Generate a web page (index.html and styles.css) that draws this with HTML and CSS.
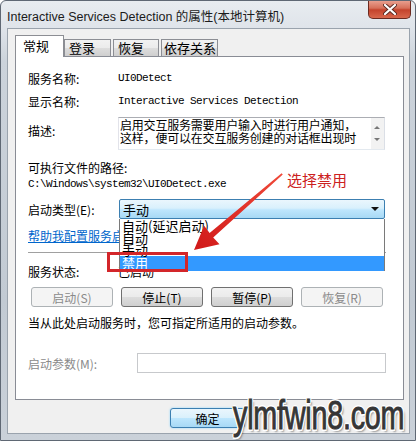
FILE: index.html
```html
<!DOCTYPE html>
<html lang="zh-CN">
<head>
<meta charset="UTF-8" />
<meta name="viewport" content="width=device-width, initial-scale=1.0"/>
<link rel="stylesheet" href="styles.css">
</head>
<body>

<div class="window">
  <div class="titlebar">
    <span class="title">Interactive Services Detection 的属性(本地计算机)</span>
    <div class="close">
      <svg width="14" height="11" viewBox="0 0 14 11">
        <path d="M2 1 L12 10 M12 1 L2 10" stroke="#5a2a22" stroke-width="4" stroke-linecap="round"/>
        <path d="M2 1 L12 10 M12 1 L2 10" stroke="#fff" stroke-width="2.2" stroke-linecap="round"/>
      </svg>
    </div>
  </div>

  <div class="client">
    <div class="tabs">
      <div class="tab active">常规</div>
      <div class="tab tab-login">登录</div>
      <div class="tab tab-recover">恢复</div>
      <div class="tab tab-deps">依存关系</div>
    </div>

    <div class="panel">
      <div class="row row-name">
        <span class="label">服务名称:</span>
        <span class="mono">UI0Detect</span>
      </div>
      <div class="row row-display">
        <span class="label">显示名称:</span>
        <span class="mono">Interactive Services Detection</span>
      </div>
      <div class="row row-desc">
        <span class="label desc-label">描述:</span>
        <div class="textbox">
          <div class="desc-text">启用交互服务需要用户输入时进行用户通知，<br>这样，便可以在交互服务创建的对话框出现时</div>
          <div class="scroll">
            <span class="scroll-up"></span>
            <span class="scroll-down"></span>
          </div>
        </div>
      </div>
      <div class="path-label">可执行文件的路径:</div>
      <div class="mono path-value">C:\Windows\system32\UI0Detect.exe</div>
      <div class="row row-type">
        <span class="label">启动类型(E):</span>
        <div class="combo">
          <span>手动</span>
          <span class="combo-arrow"></span>
          <ul class="combo-list">
            <li>自动(延迟启动)</li>
            <li>自动</li>
            <li>手动</li>
            <li class="selected">禁用</li>
          </ul>
        </div>
      </div>
      <a href="#" class="link">帮助我配置服务启动选项。</a>
      <div class="separator"></div>
      <div class="row row-status">
        <span class="label">服务状态:</span>
        <span>已启动</span>
      </div>
      <div class="buttons">
        <button class="btn" disabled>启动(S)</button>
        <button class="btn">停止(T)</button>
        <button class="btn">暂停(P)</button>
        <button class="btn" disabled>恢复(R)</button>
      </div>
      <div class="note">当从此处启动服务时，您可指定所适用的启动参数。</div>
      <div class="row row-param">
        <span class="label disabled-text">启动参数(M):</span>
        <div class="param-box"></div>
      </div>
    </div>

    <div class="footer">
      <button class="btn btn-default">确定</button>
    </div>
  </div>

  <!-- 标注 -->
  <div class="mark-box"></div>
  <svg class="mark-arrow" width="416" height="441" viewBox="0 0 416 441">
    <defs>
      <linearGradient id="arrowFill" x1="1" y1="0" x2="0" y2="1">
        <stop offset="0" stop-color="#f04a3a"/>
        <stop offset="1" stop-color="#d01818"/>
      </linearGradient>
    </defs>
    <polygon fill="url(#arrowFill)" points="282.8,174.6 213.2,237.6 219.5,244.2 194,250 204.2,225.8 209.6,232.9 281.6,173.2"/>
  </svg>
  <div class="mark-text">选择禁用</div>
  <div class="watermark">ylmfwin8.com</div>
</div>

</body>
</html>
```

FILE: styles.css
```css
:root {
  --text: #000;
  --disabled: #8a8a8a;
  --cjk: "Noto Sans CJK SC", "Noto Sans", sans-serif;
}

body {
  margin: 0;
  font-family: var(--cjk);
  font-size: 12px;
  color: var(--text);
}

.window {
  position: relative;
  width: 416px;
  height: 441px;
  box-sizing: border-box;
  border: 1px solid #5f6874;
  border-radius: 6px 6px 0 0;
  background: linear-gradient(#e8ecf0, #dfe4ea 27px, #ccd3db 60px, #c2cad3 300px, #cad1d9);
  display: flex;
  flex-direction: column;
  overflow: hidden;
}

/* 标题栏 */
.titlebar {
  height: 27px;
  display: flex;
  align-items: center;
  padding-left: 6px;
  padding-top: 1px;
  box-sizing: border-box;
}

.title {
  font-family: "Liberation Sans", var(--cjk);
  font-size: 12.5px;
  color: #1b1b1b;
}

.close {
  position: absolute;
  top: -1px;
  right: 4px;
  width: 43px;
  height: 19px;
  box-sizing: border-box;
  border: 1px solid #6b2a20;
  border-top: none;
  border-radius: 0 0 5px 5px;
  background: linear-gradient(#eba595, #d6705a 45%, #c4432c 55%, #d8674c);
  display: flex;
  align-items: center;
  justify-content: center;
}

/* 客户区 */
.client {
  flex: 1;
  margin: 0 5px 6px 6px;
  border: 1px solid #9aa3ad;
  background: #f0f0f0;
  padding: 7px 5px 0 7px;
  display: flex;
  flex-direction: column;
}

.tabs {
  height: 20px;
  display: flex;
  align-items: flex-end;
  position: relative;
  z-index: 2;
}

.tab {
  height: 17px;
  box-sizing: border-box;
  border: 1px solid #8c8e94;
  border-bottom: none;
  background: linear-gradient(#f2f2f2, #ebebeb 50%, #dddddd 50%, #cfcfcf);
  font-size: 13px;
  line-height: 16px;
  padding-left: 4px;
  white-space: nowrap;
  overflow: hidden;
}

.tab.active {
  width: 49px;
  height: 22px;
  margin-bottom: -1px;
  background: #fff;
  line-height: 20px;
  padding-left: 7px;
}

.tab-login { width: 47px; }
.tab-recover { width: 46px; margin-left: 2px; }
.tab-deps { width: 57px; margin-left: 2px; padding-left: 2px; }

.panel {
  height: 344px;
  box-sizing: border-box;
  border: 1px solid #898c95;
  background: #fff;
  padding: 0 17px 0 12px;
  display: flex;
  flex-direction: column;
}

.row {
  display: flex;
  align-items: center;
}

.label {
  width: 90px;
  flex: none;
}

.mono {
  font-family: "Liberation Mono", monospace;
  font-size: 11px;
  letter-spacing: -0.6px;
}

.row-name { margin-top: 14px; height: 14px; }
.row-display { margin-top: 9px; height: 14px; }

.row-desc {
  margin-top: 9px;
  align-items: flex-start;
}

.desc-label { margin-top: 5px; }

.textbox {
  width: 267px;
  height: 33px;
  box-sizing: border-box;
  border: 1px solid #abadb3;
  border-left-color: #e2e3ea;
  border-right-color: #dbdfe6;
  border-bottom-color: #e3e9ef;
  display: flex;
}

.desc-text {
  flex: 1;
  line-height: 13px;
  padding-left: 1px;
  white-space: nowrap;
  letter-spacing: -0.2px;
}

.scroll {
  width: 13px;
  background: #f2f2f2;
  position: relative;
}

.scroll-up, .scroll-down {
  position: absolute;
  left: 3px;
  width: 0;
  height: 0;
  border-left: 3px solid transparent;
  border-right: 3px solid transparent;
}

.scroll-up { top: 8px; border-bottom: 3px solid #777; }
.scroll-down { top: 20px; border-top: 3px solid #777; }

.path-label { margin-top: 11px; line-height: 14px; }
.path-value { margin-top: 2px; line-height: 14px; }

.row-type { margin-top: 8px; height: 20px; }

.combo {
  position: relative;
  margin-left: 1px;
  width: 266px;
  height: 20px;
  box-sizing: border-box;
  border: 1px solid #3c7fb1;
  border-radius: 2px;
  background: linear-gradient(#eaf6fd, #d9f0fc 45%, #bee6fd 55%, #a7d9f5);
  display: flex;
  align-items: center;
  padding-left: 3px;
  font-size: 13px;
}

.combo-arrow {
  position: absolute;
  right: 5px;
  top: 7px;
  border-left: 4px solid transparent;
  border-right: 4px solid transparent;
  border-top: 4px solid #111;
}

.combo-list {
  position: absolute;
  top: 19px;
  left: -1px;
  width: 266px;
  box-sizing: border-box;
  margin: 0;
  padding: 0;
  list-style: none;
  background: #fff;
  border: 1px solid #7a7a7a;
  border-top: none;
  border-bottom: none;
  z-index: 3;
  font-size: 13px;
}

.combo-list li {
  height: 12px;
  line-height: 12px;
  padding-left: 2px;
}

.combo-list li:first-child { margin-top: 1px; }

.combo-list li.selected {
  height: 15px;
  line-height: 14px;
  background: #3399ff;
  color: #fff;
}

.link {
  margin-top: 10px;
  line-height: 14px;
  color: #0066cc;
  text-decoration: underline;
  align-self: flex-start;
}

.separator {
  margin-top: 9px;
  height: 1px;
  background: #a0a0a0;
}

.row-status { margin-top: 11px; height: 14px; }

.buttons {
  margin-top: 9px;
  padding-left: 3px;
  display: flex;
  gap: 8px;
}

.btn {
  width: 82px;
  height: 20px;
  padding: 0;
  box-sizing: border-box;
  border: 1px solid #707070;
  border-radius: 3px;
  background: linear-gradient(#f2f2f2, #ebebeb 50%, #dddddd 50%, #cfcfcf);
  font-family: var(--cjk);
  font-size: 12px;
  color: #000;
}

.btn:disabled {
  border-color: #adb2b5;
  background: #f4f4f4;
  color: var(--disabled);
}

.btn-default {
  width: 75px;
  border-color: #3c7fb1;
  background: linear-gradient(#eaf6fd, #d9f0fc 50%, #bee6fd 50%, #a7d9f5);
  box-shadow: 0 0 2px #7fd0ff;
}

.note { margin-top: 9px; line-height: 14px; }

.row-param { margin-top: 23px; height: 20px; }

.disabled-text { color: var(--disabled); width: 109px; }

.param-box {
  width: 249px;
  height: 20px;
  box-sizing: border-box;
  border: 1px solid #c7c9cc;
  background: #fff;
}

.footer {
  padding: 8px 0 0 155px;
}

/* 标注与水印 */
.mark-box {
  position: absolute;
  left: 106px;
  top: 251px;
  width: 81px;
  height: 20px;
  border: 3px solid #d3262a;
  box-sizing: border-box;
  z-index: 5;
}

.mark-arrow {
  position: absolute;
  left: -1px;
  top: -1px;
  z-index: 6;
}

.mark-text {
  position: absolute;
  left: 286px;
  top: 170px;
  font-size: 15px;
  line-height: 18px;
  color: #cc2020;
  z-index: 6;
}

.watermark {
  position: absolute;
  left: 232px;
  top: 392px;
  font-family: "Liberation Sans", sans-serif;
  font-size: 41px;
  line-height: 44px;
  color: #363636;
  -webkit-text-stroke: 1px #363636;
  transform: scaleX(0.7);
  transform-origin: left top;
  letter-spacing: -0.3px;
  text-shadow:
    2px 0 0 #fff, -2px 0 0 #fff, 0 2px 0 #fff, 0 -2px 0 #fff,
    1.5px 1.5px 0 #fff, -1.5px -1.5px 0 #fff, 1.5px -1.5px 0 #fff, -1.5px 1.5px 0 #fff,
    3px 3px 2px rgba(0, 0, 0, .35);
  z-index: 7;
}
```
